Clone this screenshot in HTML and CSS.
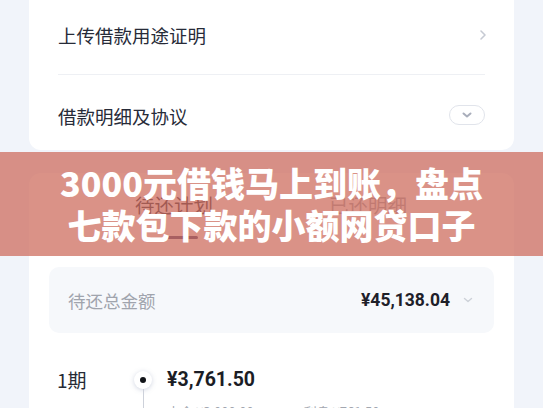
FILE: index.html
```html
<!DOCTYPE html>
<html lang="zh-CN">
<head>
    <meta charset="UTF-8">
    <meta name="viewport" content="width=device-width, initial-scale=1.0">
    <title>借款详情</title>
    <link rel="stylesheet" href="styles.css">
</head>
<body>
    <div class="page">
        <!-- 借款信息 -->
        <div class="card card-top">
            <div class="row row-first">
                <span>上传借款用途证明</span>
                <svg class="arrow" width="8" height="12" viewBox="0 0 8 12">
                    <path d="M2 2l4 4-4 4" fill="none" stroke="#c6cad3" stroke-width="1.6" stroke-linecap="round" stroke-linejoin="round"/>
                </svg>
            </div>
            <div class="divider"></div>
            <div class="row row-second">
                <span>借款明细及协议</span>
                <div class="pill">
                    <svg width="12" height="8" viewBox="0 0 12 8">
                        <path d="M2.5 2.5l3.5 3 3.5-3" fill="none" stroke="#a9aebb" stroke-width="2" stroke-linecap="round" stroke-linejoin="round"/>
                    </svg>
                </div>
            </div>
        </div>

        <!-- 还款计划 -->
        <div class="card card-plan">
            <div class="tabs">
                <div class="tab active">
                    <span>待还计划</span>
                    <i class="tab-line"></i>
                </div>
                <div class="tab">
                    <span>已还明细</span>
                </div>
            </div>

            <div class="summary">
                <span class="summary-label">待还总金额</span>
                <div class="summary-right">
                    <span class="summary-amount">¥45,138.04</span>
                    <svg width="10" height="6" viewBox="0 0 10 6">
                        <path d="M1.5 1.5l3.5 3 3.5-3" fill="none" stroke="#cdd1d8" stroke-width="1.4" stroke-linecap="round" stroke-linejoin="round"/>
                    </svg>
                </div>
            </div>

            <div class="term">
                <div class="term-label">1期</div>
                <div class="term-track">
                    <div class="dot"><i></i></div>
                    <div class="track-line"></div>
                </div>
                <div class="term-body">
                    <div class="term-amount">¥3,761.50</div>
                    <div class="term-meta">
                        <span>本金 ¥3,000.00</span>
                        <span>利息 ¥761.50</span>
                    </div>
                </div>
            </div>
            <div class="term-date">2024/03/20</div>
        </div>
    </div>

    <!-- 标题横幅 -->
    <div class="banner">
        <div>3000元借钱马上到账，盘点</div>
        <div>七款包下款的小额网贷口子</div>
    </div>
</body>
</html>
```

FILE: styles.css
```css
body {
    margin: 0;
    background-color: #f1f4fa;
    font-family: "Noto Sans CJK SC", "Noto Sans", sans-serif;
    color: #262a35;
    position: relative;
    height: 408px;
    overflow: hidden;
}
.page {
    padding: 0 29px;
}
.card {
    background-color: #ffffff;
}
.card-top {
    margin-top: -4px;
    padding: 0 29px;
    border-radius: 0 0 12px 12px;
}
.row {
    display: flex;
    align-items: center;
    justify-content: space-between;
    font-size: 18.5px;
    color: #272b38;
}
.row-first {
    height: 78px;
}
.row-second {
    height: 69px;
    padding-top: 6px;
}
.arrow {
    margin-right: -2px;
}
.divider {
    height: 1px;
    background-color: #eef0f4;
}
.pill {
    width: 34px;
    height: 18px;
    border: 1px solid #e1e4eb;
    border-radius: 10px;
    display: flex;
    align-items: center;
    justify-content: center;
    margin-top: -2px;
}
.card-plan {
    margin-top: 23px;
    padding: 0 20px;
    border-radius: 12px 12px 0 0;
    height: 260px;
}
.tabs {
    display: flex;
    gap: 116px;
    padding: 18px 0 0 86px;
}
.tab {
    display: flex;
    flex-direction: column;
    align-items: center;
    font-size: 19.5px;
    line-height: 28px;
    color: #9a9fab;
}
.tab.active {
    color: #1f2230;
}
.tab-line {
    display: block;
    width: 32px;
    height: 3px;
    margin: 17px 0 0 16px;
    border-radius: 2px;
    background-color: #3a3468;
}
.summary {
    margin-top: 28px;
    height: 66px;
    padding: 0 21px 0 19px;
    border-radius: 10px;
    background-color: #f6f8fb;
    display: flex;
    align-items: center;
    justify-content: space-between;
}
.summary-label {
    font-size: 17.5px;
    color: #a0a4ad;
}
.summary-right {
    display: flex;
    align-items: center;
    gap: 13px;
}
.summary-amount {
    font-family: "Roboto", "Noto Sans CJK SC", sans-serif;
    font-weight: 700;
    font-size: 17.5px;
    color: #1e2029;
}
.term {
    display: flex;
    margin-top: 33px;
    padding-left: 8px;
}
.term-label {
    width: 77px;
    font-size: 19px;
    line-height: 28px;
}
.term-track {
    width: 18px;
    display: flex;
    flex-direction: column;
    align-items: center;
}
.dot {
    width: 18px;
    height: 18px;
    margin-top: 5px;
    border-radius: 50%;
    background-color: #ffffff;
    box-shadow: 0 1px 5px rgba(120, 135, 170, 0.35);
    display: flex;
    align-items: center;
    justify-content: center;
}
.dot i {
    width: 6px;
    height: 6px;
    border-radius: 50%;
    background-color: #111318;
}
.track-line {
    width: 1px;
    height: 40px;
    background-color: #cdd1da;
}
.term-body {
    padding-left: 15px;
}
.term-amount {
    font-family: "Roboto", "Noto Sans CJK SC", sans-serif;
    font-weight: 700;
    font-size: 19.5px;
    line-height: 28px;
    color: #1b1d25;
}
.term-meta {
    display: flex;
    gap: 50px;
    margin-top: 8px;
    font-size: 13px;
    color: #a3a7b0;
}
.term-date {
    margin: -19px 0 0 8px;
    font-size: 13px;
    color: #a3a7b0;
}
.banner {
    position: absolute;
    top: 152px;
    left: 0;
    right: 0;
    height: 104px;
    display: flex;
    flex-direction: column;
    justify-content: center;
    align-items: center;
    background-color: rgba(205, 110, 95, 0.75);
    color: #ffffff;
    font-weight: 900;
    font-size: 34px;
    line-height: 42px;
}
```
